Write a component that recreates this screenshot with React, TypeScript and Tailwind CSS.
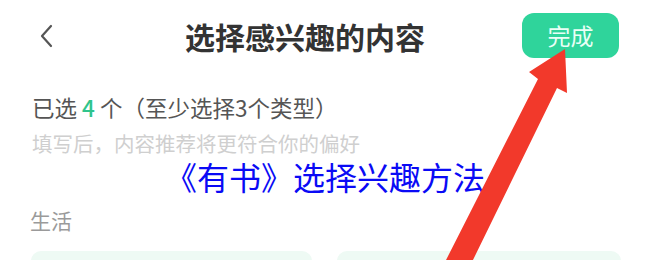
import React from "react";

export default function App() {
    return (
        <div className="relative w-[650px] h-[260px] overflow-hidden bg-white font-['Noto_Sans_CJK_SC',sans-serif]">
            {/* Header */}
            <div className="flex items-center h-[45px] mt-[13px]">
                <svg className="ml-[40px] w-[13px] h-[24px]" viewBox="0 0 13 24" fill="none">
                    <path d="M11 2 L2 12 L11 22" stroke="#555" strokeWidth="2.2" strokeLinecap="round" strokeLinejoin="round" />
                </svg>
                <h1 className="ml-[132px] text-[30px] leading-[30px] font-bold text-[#333]">选择感兴趣的内容</h1>
                <button className="ml-auto mr-[31px] w-[97px] h-[45px] rounded-[12px] bg-[#2fd49b] text-[#eafff6] text-[23px] leading-[23px] flex items-center justify-center">
                    完成
                </button>
            </div>

            {/* Selection info */}
            <p className="mt-[38px] ml-[32px] text-[22.5px] leading-[22px] text-[#555]">
                已选 <span className="text-[#2fc48c] font-medium">4</span> 个（至少选择3个类型）
            </p>
            <p className="mt-[15px] ml-[32px] text-[20.5px] leading-[20px] text-[#cfcfcf]">
                填写后，内容推荐将更符合你的偏好
            </p>

            {/* Caption */}
            <p className="mt-[9px] text-center text-[32px] leading-[28px] text-[#0a0af5]">《有书》选择兴趣方法</p>

            {/* Category */}
            <p className="mt-[20px] ml-[30px] text-[21px] leading-[21px] text-[#9a9a9a]">生活</p>
            <div className="mt-[20px] flex gap-[25px] pl-[31px]">
                <div className="w-[281px] h-[40px] rounded-t-[10px] bg-[#eefaf4]" />
                <div className="w-[284px] h-[40px] rounded-t-[10px] bg-[#eefaf4]" />
            </div>

            {/* Red arrow annotation */}
            <svg className="absolute inset-0 w-[650px] h-[260px] pointer-events-none" viewBox="0 0 650 260">
                <polygon
                    points="445,262 538,79 529,72 565,49 567,93 557,88 472,262"
                    fill="#f2392b"
                    strokeLinejoin="round"
                />
            </svg>
        </div>
    );
}
